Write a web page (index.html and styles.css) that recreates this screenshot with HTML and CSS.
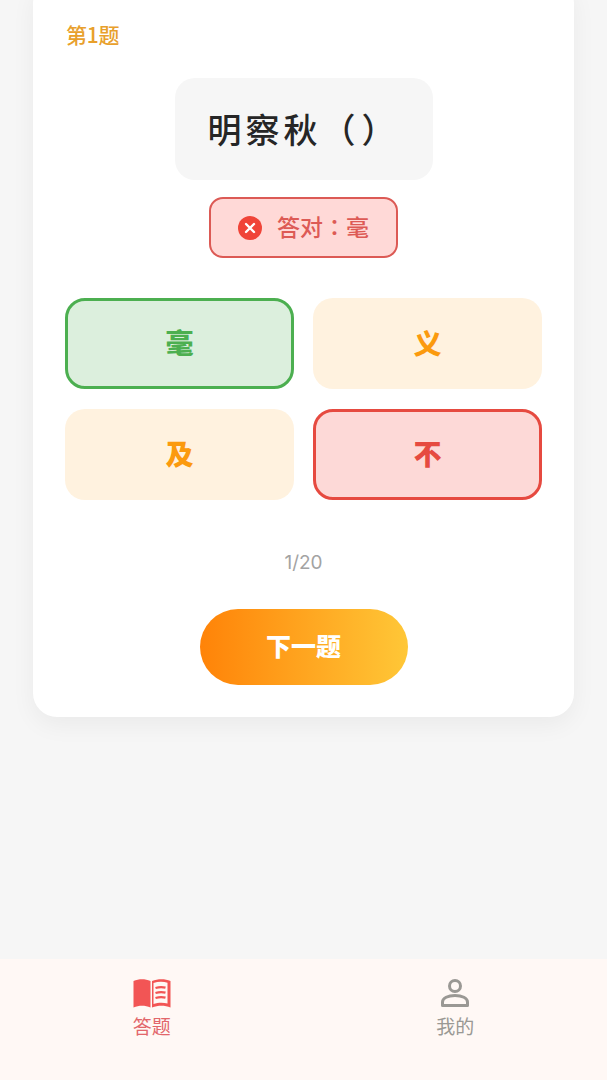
FILE: index.html
```html
<!DOCTYPE html>
<html lang="zh-CN">
<head>
    <meta charset="UTF-8">
    <meta name="viewport" content="width=device-width, initial-scale=1.0">
    <title>答题</title>
    <link rel="stylesheet" href="styles.css">
</head>
<body>
    <div class="page">
        <main class="main">
            <div class="card">
                <div class="quiz-no">第1题</div>
                <div class="question-wrap">
                    <div class="question">明察秋（<span class="paren-close">）</span></div>
                </div>
                <div class="result-wrap">
                    <div class="result">
                        <svg class="result-icon" viewBox="0 0 24 24" width="24" height="24">
                            <circle cx="12" cy="12" r="12" fill="#f04438"/>
                            <path d="M8 8l8 8M16 8l-8 8" stroke="#fff" stroke-width="2.4" stroke-linecap="round" fill="none"/>
                        </svg>
                        <span class="result-text">答对：毫</span>
                    </div>
                </div>
                <div class="options">
                    <div class="option correct">毫</div>
                    <div class="option">义</div>
                    <div class="option">及</div>
                    <div class="option wrong">不</div>
                </div>
                <div class="progress">1/20</div>
                <div class="next-wrap">
                    <div class="next-btn">下一题</div>
                </div>
            </div>
        </main>
        <nav class="tabbar">
            <div class="tab active">
                <svg viewBox="0 0 38 30" width="38" height="30">
                    <path d="M0.500 3C6 0.500 12 0.500 17.500 3V29.500C12 27 6 27 0.500 29.500Z" fill="#f25555"/>
                    <path d="M19 3C25 0.500 32 0.500 37.500 3V29.500C32 27 25 27 19 29.500Z" fill="#f25555"/>
                    <path d="M20.500 5C25 3.400 30.500 3.400 34.500 4.800V25.500C30.500 24.400 25 24.400 20.500 26Z" fill="#fff8f5"/>
                    <path d="M22.500 10C26 8.800 29.500 8.800 32.500 9.600M22.500 15C26 13.800 29.500 13.800 32.500 14.600M22.500 20C26 18.800 29.500 18.800 32.500 19.600" stroke="#f25555" stroke-width="2.200" fill="none"/>
                </svg>
                <span>答题</span>
            </div>
            <div class="tab">
                <svg viewBox="0 0 30 30" width="30" height="30">
                    <circle cx="15" cy="8" r="5.500" stroke="#9a9894" stroke-width="3" fill="none"/>
                    <path d="M2.500 27.500V24C2.500 20 8 17.500 15 17.500S27.500 20 27.500 24V27.500Z" stroke="#9a9894" stroke-width="3" stroke-linejoin="round" fill="none"/>
                </svg>
                <span>我的</span>
            </div>
        </nav>
    </div>
</body>
</html>
```

FILE: styles.css
```css
* {
    box-sizing: border-box;
}

body {
    margin: 0;
    font-family: "Noto Sans CJK SC", "Noto Sans", sans-serif;
    background-color: #f6f6f6;
}

.page {
    height: 1080px;
    overflow: hidden;
    display: flex;
    flex-direction: column;
}

.main {
    flex: 1;
}

.card {
    margin: -20px 33px 0;
    height: 737px;
    padding: 40px 32px 0;
    background-color: #fff;
    border-radius: 24px;
    box-shadow: 0 8px 24px rgba(0, 0, 0, 0.05);
}

.quiz-no {
    height: 28px;
    padding-left: 1px;
    line-height: 28px;
    font-size: 21px;
    font-weight: 500;
    letter-spacing: -0.2px;
    color: #e8a02c;
}

.question-wrap {
    display: flex;
    justify-content: center;
    margin-top: 30px;
}

.question {
    width: 258px;
    height: 102px;
    padding-left: 33px;
    line-height: 102px;
    font-size: 34px;
    font-weight: 500;
    letter-spacing: 4px;
    text-spacing-trim: space-all;
    white-space: nowrap;
    color: #262626;
    background-color: #f6f6f6;
    border-radius: 20px;
}

.paren-close {
    margin-left: 2px;
}

.result-wrap {
    display: flex;
    justify-content: center;
    margin-top: 17px;
}

.result {
    width: 189px;
    height: 61px;
    display: flex;
    align-items: center;
    justify-content: center;
    gap: 15px;
    color: #dd5a55;
    background-color: #ffd9d7;
    border: 2px solid #dc5a55;
    border-radius: 14px;
}

.result-icon {
    flex: none;
}

/* TC face: its colon sits in the middle of the cell */
.result-text {
    margin-bottom: 3px;
    font-family: "Noto Sans CJK TC", sans-serif;
    font-feature-settings: "locl" 0;
    font-size: 23px;
    font-weight: 500;
    white-space: nowrap;
}

.options {
    display: grid;
    grid-template-columns: 229px 229px;
    grid-auto-rows: 91px;
    gap: 20px 19px;
    margin-top: 40px;
}

.option {
    display: flex;
    align-items: center;
    justify-content: center;
    padding-bottom: 3px;
    font-size: 28px;
    font-weight: 900;
    color: #fb9a0e;
    background-color: #fff2df;
    border-radius: 20px;
}

.option.correct {
    color: #4caf50;
    background-color: #dcefdd;
    border: 3px solid #4caf50;
}

.option.wrong {
    color: #e64a40;
    background-color: #fdd9d7;
    border: 3px solid #e64a40;
}

.progress {
    margin-top: 48px;
    height: 30px;
    line-height: 30px;
    text-align: center;
    font-family: "Inter", sans-serif;
    font-size: 19px;
    color: #a3a3a3;
}

.next-wrap {
    display: flex;
    justify-content: center;
    margin-top: 31px;
}

.next-btn {
    width: 208px;
    height: 76px;
    line-height: 72px;
    text-align: center;
    font-size: 25px;
    font-weight: 900;
    color: #fff;
    background: linear-gradient(90deg, #ff8308, #ffc737);
    border-radius: 38px;
}

.tabbar {
    height: 121px;
    display: flex;
    background-color: #fff8f5;
}

.tab {
    width: 50%;
    padding-top: 19px;
    display: flex;
    flex-direction: column;
    align-items: center;
    font-size: 19px;
    color: #9a9894;
}

.tab svg {
    display: block;
}

.tab span {
    margin-top: 4px;
    line-height: 28px;
}

.tab.active {
    color: #e2666a;
}
```
